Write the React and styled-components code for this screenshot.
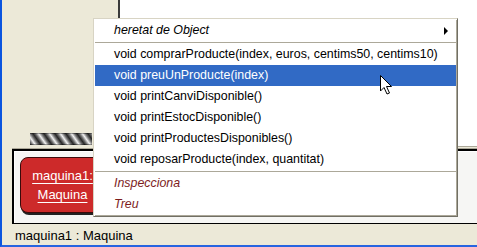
import React from 'react';
import styled, { createGlobalStyle } from 'styled-components';

const GlobalStyle = createGlobalStyle`
  html, body {
    margin: 0;
    padding: 0;
    background: #ece9d8;
  }
  body {
    font-family: "Liberation Sans", Arial, sans-serif;
  }
`;

const Window = styled.div`
  position: relative;
  width: 475px;
  height: 245px;
  background: #ece9d8;
  border-left: 2px solid #0b55df;
  border-bottom: 2px solid #2764e0;
  display: flex;
  flex-direction: column;
  overflow: hidden;
  font-family: "Liberation Sans", Arial, sans-serif;
`;

const Upper = styled.div`
  display: flex;
  height: 148px;
`;

const LeftPanel = styled.div`
  width: 116px;
  display: flex;
  flex-direction: column;
  justify-content: flex-end;
  padding: 0 0 3px 28px;
  box-sizing: border-box;
`;

// barber pole shown while the VM is running
const BarberPole = styled.div`
  width: 62px;
  height: 12px;
  background: repeating-linear-gradient(
    55deg,
    #262626 0px,
    #6e6e6e 2px,
    #f2f2f2 4.5px,
    #6e6e6e 7px,
    #262626 9px
  );
  box-shadow: inset 0 1px 0 rgba(0, 0, 0, 0.35), inset 0 -1px 0 rgba(0, 0, 0, 0.35);
`;

const Canvas = styled.div`
  flex: 1;
  height: 146px;
  background: #fff;
  border-left: 2px solid #3a3a3a;
  border-bottom: 1px solid #aca899;
`;

const Bench = styled.div`
  height: 76px;
  margin-left: 10px;
  border-top: 1px solid #aca899;
  box-sizing: border-box;
  display: flex;
`;

const BenchInner = styled.div`
  flex: 1;
  background: #f6f6f4;
  border-top: 2px solid #000;
  border-left: 2px solid #000;
  border-bottom: 1px solid #000;
  box-shadow: inset 1px 1px 0 #fff;
  padding: 6px 0 0 6px;
`;

const ObjectCard = styled.div`
  width: 85px;
  height: 56px;
  box-sizing: border-box;
  background: #cd2a2a;
  border: 1px solid #3a0a0a;
  border-radius: 8px;
  box-shadow: 1px 2px 0 #222;
  display: flex;
  flex-direction: column;
  align-items: center;
  justify-content: center;
`;

const ObjectLine = styled.span`
  color: #fff;
  font-size: 13px;
  line-height: 19px;
  text-decoration: underline;
  text-underline-offset: 3px;
`;

const StatusBar = styled.div`
  height: 21px;
  padding-left: 13px;
  font-size: 13px;
  line-height: 24px;
  color: #000;
`;

const Menu = styled.div`
  position: absolute;
  left: 91px;
  top: 18px;
  width: 365px;
  background: #fff;
  box-sizing: border-box;
  border: 1px solid;
  border-color: #d8d4c4 #716f64 #716f64 #d8d4c4;
  box-shadow: inset 1px 1px 0 #fff, inset -1px -1px 0 #aca899;
  padding: 1px;
`;

const Item = styled.div`
  position: relative;
  height: 21px;
  line-height: 21px;
  padding-left: 19px;
  font-size: 12.4px;
  white-space: nowrap;
  color: ${p => (p.$active ? '#fff' : p.$action ? '#7d1d1d' : '#000')};
  background: ${p => (p.$active ? '#316ac5' : 'transparent')};
  font-style: ${p => (p.$italic ? 'italic' : 'normal')};
`;

const Separator = styled.div`
  height: 1px;
  margin: 1px 0;
  background: #aca899;
`;

const SubArrow = styled.span`
  position: absolute;
  right: 8px;
  top: 7px;
  width: 0;
  height: 0;
  border-top: 4px solid transparent;
  border-bottom: 4px solid transparent;
  border-left: 4px solid #000;
`;

const Cursor = styled.svg`
  position: absolute;
  left: 377px;
  top: 74px;
`;

const methods = [
  'void comprarProducte(index, euros, centims50, centims10)',
  'void preuUnProducte(index)',
  'void printCanviDisponible()',
  'void printEstocDisponible()',
  'void printProductesDisponibles()',
  'void reposarProducte(index, quantitat)',
];

export default function App() {
  return (
    <>
      <GlobalStyle />
      <Window>
        <Upper>
          <LeftPanel>
            <BarberPole />
          </LeftPanel>
          <Canvas />
        </Upper>
        <Bench>
          <BenchInner>
            <ObjectCard>
              <ObjectLine>maquina1:</ObjectLine>
              <ObjectLine>Maquina</ObjectLine>
            </ObjectCard>
          </BenchInner>
        </Bench>
        <StatusBar>maquina1 : Maquina</StatusBar>

        <Menu>
          <Item $italic>
            heretat de Object
            <SubArrow />
          </Item>
          <Separator />
          {methods.map((m, i) => (
            <Item key={m} $active={i === 1}>{m}</Item>
          ))}
          <Separator />
          <Item $italic $action>Inspecciona</Item>
          <Item $italic $action>Treu</Item>
        </Menu>

        <Cursor width="14" height="22" viewBox="0 0 14 22">
          <path
            d="M1.5 1.5 L1.5 17 L5 13.5 L8 20 L10.5 19 L7.5 12.5 L12.5 12.5 Z"
            fill="#fff"
            stroke="#000"
            strokeWidth="1"
            strokeLinejoin="miter"
          />
        </Cursor>
      </Window>
    </>
  );
}
